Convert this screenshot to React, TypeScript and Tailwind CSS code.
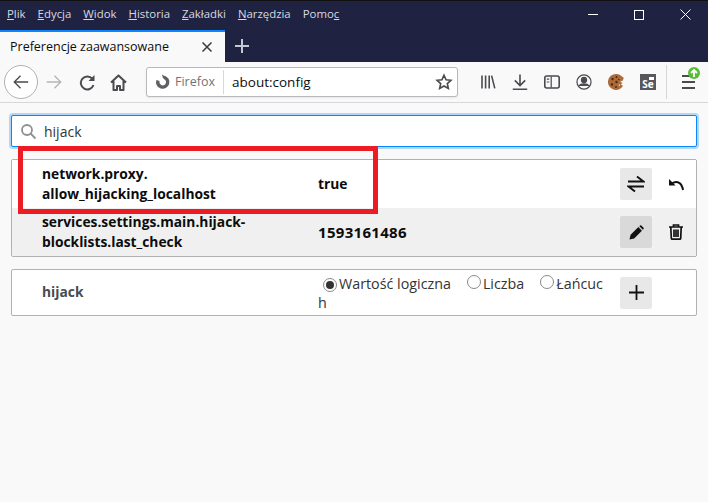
const font = { fontFamily: '"Open Sans", "Noto Sans", sans-serif' };

const menus: [string, string][] = [
  ["P", "lik"],
  ["E", "dycja"],
  ["W", "idok"],
  ["H", "istoria"],
  ["Z", "akładki"],
  ["N", "arzędzia"],
];

function Stroke({ children, size = 20, w = 2, color = "#4a4a4f" }: { children: React.ReactNode; size?: number; w?: number; color?: string }) {
  return (
    <svg width={size} height={size} viewBox="0 0 20 20" fill="none" stroke={color} strokeWidth={w}>
      {children}
    </svg>
  );
}

function Cookie() {
  return (
    <svg width="16" height="16" viewBox="0 0 16 16">
      <path d="M8 0a8 8 0 1 0 7 11.800l-2.200-1.300 1.700-1.500-2.500-1.200 2.800-1.300 1-2.500-2.300-2A8 8 0 0 0 8 0z" fill="#ad6b3a" />
      <circle cx="4.500" cy="5" r="1.200" fill="#4a2a12" />
      <circle cx="8.500" cy="3" r="1" fill="#4a2a12" />
      <circle cx="4" cy="10.500" r="1.200" fill="#4a2a12" />
      <circle cx="8.500" cy="8" r="1.200" fill="#4a2a12" />
      <circle cx="8" cy="13" r="1" fill="#4a2a12" />
      <circle cx="11.500" cy="11" r="0.800" fill="#f2dcc8" />
      <circle cx="10.800" cy="5.500" r="0.800" fill="#4a2a12" />
    </svg>
  );
}

function Radio({ on }: { on?: boolean }) {
  return (
    <span className="inline-flex h-[14px] w-[14px] shrink-0 items-center justify-center rounded-full border border-[#8a8a8a] bg-white">
      {on && <span className="h-[8px] w-[8px] rounded-full bg-[#333]" />}
    </span>
  );
}

export default function App() {
  return (
    <div className="flex h-[502px] w-[708px] flex-col overflow-hidden bg-[#f9f9fa] text-[#0c0c0d]" style={font}>
      {/* title bar + tabs */}
      <div className="border-t border-[#111] bg-[#1f2341]">
        <div className="flex h-[29px] items-center justify-between">
          <div className="flex gap-[12px] pb-[4px] pl-[7px] text-[11.400px] text-[#d8d9e0]">
            {menus.map(([k, r]) => (
              <span key={r}>
                <span className="underline">{k}</span>
                {r}
              </span>
            ))}
            <span>
              Pomo<span className="underline">c</span>
            </span>
          </div>
          <div className="flex items-center gap-[36px] pr-[17px] pb-[2px]">
            <div className="h-px w-[10px] bg-white" />
            <div className="h-[10px] w-[10px] border border-white" />
            <svg width="11" height="11" viewBox="0 0 11 11" stroke="#fff" strokeWidth="1">
              <path d="M0.500 0.500l10 10M10.500 0.500l-10 10" />
            </svg>
          </div>
        </div>
        <div className="flex h-[32px] items-stretch">
          <div className="flex w-[225px] items-center justify-between border-t-2 border-[#0a84ff] bg-[#f9f9fa] pr-[13px] pl-[10px] text-[12.500px]">
            <span>Preferencje zaawansowane</span>
            <svg width="10" height="10" viewBox="0 0 10 10" stroke="#3a3a3f" strokeWidth="1.500">
              <path d="M0.500 0.500l9 9M9.500 0.500l-9 9" />
            </svg>
          </div>
          <div className="flex w-[34px] items-center justify-center">
            <svg width="14" height="14" viewBox="0 0 14 14" stroke="#c4c6d4" strokeWidth="2">
              <path d="M7 0v14M0 7h14" />
            </svg>
          </div>
        </div>
      </div>

      {/* toolbar */}
      <div className="flex h-[41px] items-center border-b border-[#d7d7db] bg-[#f9f9fa] pl-[4px]">
        <div className="flex h-[34px] w-[34px] shrink-0 items-center justify-center rounded-full border border-[#b1b1b3] bg-white">
          <Stroke w={1.500} size={18}>
            <path d="M18 10H2.500M9.500 3L2.500 10l7 7" />
          </Stroke>
        </div>
        <div className="ml-[4px] flex w-[24px] shrink-0 justify-center">
          <Stroke color="#b5b5b7" w={1.500} size={18}>
            <path d="M2 10h15.500M10.500 3l7 7-7 7" />
          </Stroke>
        </div>
        <div className="ml-[9px] flex w-[24px] shrink-0 justify-center">
          <svg width="17" height="17" viewBox="0 0 17 17" fill="none" stroke="#4a4a4f" strokeWidth="2">
            <path d="M14.500 11a6.500 6.500 0 1 1-1.200-6.300" />
            <path d="M15.500 1v6h-6z" fill="#4a4a4f" stroke="none" />
          </svg>
        </div>
        <div className="ml-[7px] flex w-[24px] shrink-0 justify-center">
          <svg width="17" height="17" viewBox="0 0 17 17" fill="none" stroke="#4a4a4f" strokeWidth="2">
            <path d="M1 8.500l7.500-7 7.500 7M3.500 7v9h3.500v-4h3v4h3.500V7" strokeLinejoin="round" />
          </svg>
        </div>
        <div className="ml-[16px] flex h-[30px] w-[312px] shrink-0 items-center rounded-[3px] border border-[#b9b9bb] bg-white shadow-[0_1px_2px_rgba(0,0,0,0.08)]">
          <div className="flex h-[24px] items-center gap-[4px] border-r border-[#d7d7db] pr-[8px] pl-[8px] text-[12.500px] text-[#737373]">
            <svg width="16" height="16" viewBox="0 0 16 16" fill="none" stroke="#5f5f64" strokeWidth="3.400">
              <path d="M9 3.300a5 5 0 1 1-6 3.200" />
              <path d="M7 0.500l4 2.500-3 1.500z" fill="#5f5f64" stroke="none" />
            </svg>
            <span className="pt-[1px]">Firefox</span>
          </div>
          <span className="ml-[8px] flex-1 pt-[1px] text-[13.500px]">about:config</span>
          <div className="mr-[4px]">
            <Stroke size={18} w={1.800}>
              <path d="M10 2.500l2.300 5 5.400.6-4 3.700 1.100 5.400L10 14.500l-4.800 2.700 1.100-5.400-4-3.700 5.400-.6z" />
            </Stroke>
          </div>
        </div>
        <div className="ml-[22px] flex shrink-0 items-center gap-[16px]">
          <Stroke w={2} size={16}>
            <path d="M2.500 2v16M7 2v16M11.500 2v16M14.500 2l4 16" />
          </Stroke>
          <Stroke w={2} size={16}>
            <path d="M10 0.500v14M3.500 8l6.500 6.500L16.500 8M1 19h18" />
          </Stroke>
          <Stroke w={2} size={16}>
            <rect x="1" y="2.500" width="18" height="15" rx="2.500" />
            <path d="M9 3v14M3.500 6.500h3M3.500 10h3" strokeWidth={1.500} />
          </Stroke>
          <Stroke w={1.500} size={16}>
            <circle cx="10" cy="10" r="8.800" />
            <circle cx="10" cy="7.500" r="3.200" fill="#4a4a4f" />
            <path d="M4 15c1.500-3.500 10.500-3.500 12 0" fill="#4a4a4f" />
          </Stroke>
          <Cookie />
          <div className="relative flex h-[16px] w-[16px] items-end justify-center bg-[#58585c] text-[10px] leading-[12px] font-bold text-white">
            Se
            <span className="absolute top-[3px] right-[2px] h-[3px] w-[5px] bg-white" />
          </div>
        </div>
        <div className="ml-[10px] h-[34px] w-px shrink-0 bg-[#d7d7db]" />
        <div className="relative ml-[15px] shrink-0">
          <div className="flex flex-col gap-[4px]">
            <div className="h-[2px] w-[13px] bg-[#4a4a4f]" />
            <div className="h-[2px] w-[13px] bg-[#4a4a4f]" />
            <div className="h-[2px] w-[13px] bg-[#4a4a4f]" />
          </div>
          <svg className="absolute -top-[8px] -right-[5px]" width="12" height="12" viewBox="0 0 12 12">
            <circle cx="6" cy="6" r="6" fill="#57bd35" />
            <path d="M6 10V3M3 6l3-3 3 3" stroke="#fff" strokeWidth="1.800" fill="none" />
          </svg>
        </div>
      </div>

      {/* page */}
      <div className="relative flex flex-1 flex-col px-[11px] pt-[12px]">
        <div className="flex h-[32px] w-[686px] items-center rounded-[2px] border border-[#0a84ff] bg-white shadow-[0_0_0_2px_rgba(10,132,255,0.3)]">
          <svg className="ml-[8px]" width="17" height="17" viewBox="0 0 17 17" fill="none" stroke="#8f8f94" strokeWidth="1.800">
            <circle cx="7" cy="7" r="5" />
            <path d="M10.500 10.500l5 5" />
          </svg>
          <span className="ml-[7px] text-[14px] text-[#333]">hijack</span>
        </div>

        <div className="mt-[12px] w-[686px] rounded-[2px] border border-[#b1b1b3] text-[13.800px] font-bold">
          <div className="flex h-[48px] items-center bg-white">
            <div className="w-[276px] pl-[30px] leading-[20px]">
              network.proxy.
              <br />
              allow_hijacking_localhost
            </div>
            <div className="flex-1 pt-[1px] pl-[30px]">true</div>
            <div className="mr-[8px] flex items-center gap-[12px]">
              <div className="flex h-[32px] w-[32px] items-center justify-center rounded-[2px] bg-[#e8e8e8]">
                <svg width="18" height="18" viewBox="0 0 18 18" fill="none" stroke="#111" strokeWidth="2">
                  <path d="M1 6.500h15.500L10 1.500M17 11.500H1.500L8 16.500" />
                </svg>
              </div>
              <div className="flex w-[24px] justify-center">
                <svg width="16" height="13" viewBox="0 0 16 13" fill="none" stroke="#111" strokeWidth="2">
                  <path d="M1 1v6.500h6.500z" fill="#111" stroke="none" />
                  <path d="M3 6.500C6.500 2.500 13.500 2.500 15 12" />
                </svg>
              </div>
            </div>
          </div>
          <div className="flex h-[48px] items-center bg-[#f0f0f0]">
            <div className="w-[276px] pl-[30px] leading-[20px]">
              services.settings.main.hijack-
              <br />
              blocklists.last_check
            </div>
            <div className="flex-1 pl-[30px] text-[15px] tracking-[0.300px]">1593161486</div>
            <div className="mr-[8px] flex items-center gap-[12px]">
              <div className="flex h-[32px] w-[32px] items-center justify-center rounded-[2px] bg-[#d9d9d9]">
                <svg width="15" height="15" viewBox="0 0 16 16" fill="#111">
                  <path d="M0.500 15.500l1.200-5L10 2.200l3.800 3.800L5.500 14.300zM11 1.200l.8-.7q.7-.5 1.300 0l2.400 2.400q.5.6 0 1.300l-.7.8z" />
                </svg>
              </div>
              <div className="flex w-[24px] justify-center">
                <svg width="14" height="16" viewBox="0 0 14 16" fill="none" stroke="#111" strokeWidth="1.700">
                  <path d="M0 3h14M4.500 3V1h5v2M1.800 3l.5 11.500q.1.700.8.700h7.800q.7 0 .8-.7L12.200 3M5 5.500v7.500M7 5.500v7.500M9 5.500v7.500" />
                </svg>
              </div>
            </div>
          </div>
        </div>

        <div className="mt-[12px] flex h-[47px] w-[686px] items-center rounded-[2px] border border-[#b1b1b3] bg-white">
          <div className="w-[276px] pl-[30px] text-[13.800px] font-bold text-[#4a4a4f]">hijack</div>
          <div className="w-[332px] pl-[30px] text-[14.300px] leading-[19px] text-[#333]">
            <div className="flex w-[290px] items-center">
              <span className="ml-[5px]"><Radio on /></span>
              <span className="ml-[2px]">Wartość logiczna</span>
              <span className="ml-[16px]"><Radio /></span>
              <span className="ml-[2px]">Liczba</span>
              <span className="ml-[16px]"><Radio /></span>
              <span className="ml-[2px]">Łańcuc</span>
            </div>
            <div>h</div>
          </div>
          <div className="flex h-[32px] w-[32px] items-center justify-center rounded-[2px] bg-[#e8e8e8]">
            <svg width="15" height="15" viewBox="0 0 15 15" stroke="#111" strokeWidth="1.800">
              <path d="M7.500 0v15M0 7.500h15" />
            </svg>
          </div>
        </div>

        {/* red annotation */}
        <div className="absolute top-[43px] left-[18px] h-[68px] w-[360px] border-[5px] border-[#ed1c24]" />
      </div>
    </div>
  );
}
